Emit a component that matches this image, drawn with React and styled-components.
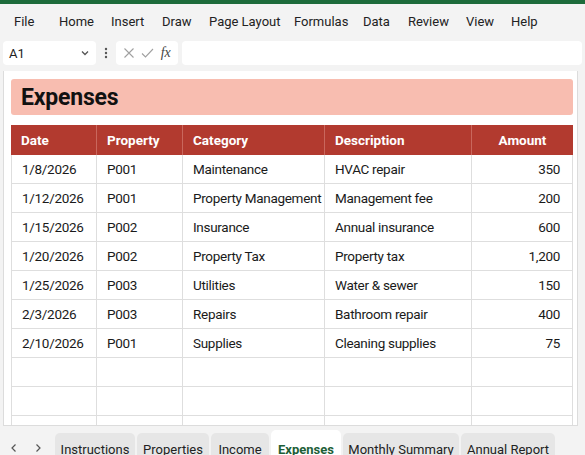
import React from 'react';
import styled, { createGlobalStyle } from 'styled-components';

const GlobalStyle = createGlobalStyle`
  html, body { margin: 0; padding: 0; background: #f3f3f3; }
  body { font-family: Roboto, "Liberation Sans", sans-serif; }
`;

const Frame = styled.div`
  width: 585px;
  height: 455px;
  overflow: hidden;
  display: flex;
  flex-direction: column;
  background: #f3f3f3;
`;

const TopStrip = styled.div`
  height: 4px;
  background: #1d6b3b;
  flex-shrink: 0;
`;

const MenuBar = styled.div`
  height: 35px;
  display: flex;
  align-items: center;
  padding-left: 14px;
  font-family: Roboto, "Liberation Sans", sans-serif;
  font-size: 13px;
  color: #222;
  flex-shrink: 0;
`;

const MenuItem = styled.span`
  width: ${p => p.w}px;
  white-space: nowrap;
`;

const FormulaRow = styled.div`
  height: 28px;
  display: flex;
  align-items: center;
  padding: 0 3px;
  gap: 4px;
  flex-shrink: 0;
`;

const NameBox = styled.div`
  width: 93px;
  height: 24px;
  box-sizing: border-box;
  background: #fff;
  border-radius: 4px;
  display: flex;
  align-items: center;
  justify-content: space-between;
  padding: 0 6px;
  font-size: 13px;
  color: #222;
`;

const Dots = styled.div`
  width: 12px;
  display: flex;
  justify-content: center;
`;

const FxBox = styled.div`
  width: 62px;
  height: 24px;
  box-sizing: border-box;
  background: #fff;
  border-radius: 4px;
  display: flex;
  align-items: center;
  justify-content: space-around;
  padding: 0 4px;
`;

const FxText = styled.span`
  font-family: "Liberation Serif", serif;
  font-style: italic;
  font-size: 14px;
  color: #444;
`;

const FormulaInput = styled.div`
  flex: 1;
  height: 24px;
  background: #fff;
  border-radius: 4px;
`;

const Sheet = styled.div`
  flex: 1;
  margin: 4px 7px 0 3px;
  background: #fff;
  border-left: 1px solid #dcdcdc;
  border-right: 1px solid #dcdcdc;
  border-bottom: 1px solid #dcdcdc;
  padding: 8px 4px 0 7px;
  overflow: hidden;
`;

const TitleBand = styled.div`
  height: 36px;
  background: #f8bdb0;
  border-radius: 3px;
  display: flex;
  align-items: center;
  padding-left: 10px;
  font-weight: 700;
  font-size: 23px;
  letter-spacing: -0.2px;
  color: #111;
  margin-bottom: 10px;
`;

const Table = styled.div`
  display: grid;
  grid-template-columns: 85px 86px 142px 147px 102px;
  width: 562px;
`;

const HeadCell = styled.div`
  height: 30px;
  background: #b23a2f;
  color: #fff;
  font-weight: 700;
  font-size: 13.5px;
  display: flex;
  align-items: center;
  justify-content: ${p => (p.center ? 'center' : 'flex-start')};
  padding: 0 10px;
  border-left: ${p => (p.first ? 'none' : '1px solid #c9675d')};
  box-sizing: border-box;
`;

const Cell = styled.div`
  height: 29px;
  box-sizing: border-box;
  border-bottom: 1px solid #dedede;
  border-left: 1px solid #dedede;
  border-right: ${p => (p.last ? '1px solid #dedede' : 'none')};
  display: flex;
  align-items: center;
  justify-content: ${p => (p.right ? 'flex-end' : 'flex-start')};
  padding: 0 12px 0 10px;
  font-size: 13.5px;
  letter-spacing: -0.3px;
  color: #1a1a1a;
  white-space: nowrap;
`;

const TabBar = styled.div`
  height: 29px;
  display: flex;
  align-items: flex-start;
  padding: 4px 0 0 2px;
  box-sizing: border-box;
  overflow: hidden;
  flex-shrink: 0;
  font-family: Roboto, "Liberation Sans", sans-serif;
  font-size: 13px;
`;

const Arrow = styled.span`
  width: 24px;
  height: 32px;
  display: flex;
  align-items: center;
  justify-content: center;
  margin-top: 2px;
`;

const Spacer = styled.span`
  width: 5px;
`;

const Tab = styled.div`
  width: ${p => p.w}px;
  flex-shrink: 0;
  display: flex;
  align-items: center;
  justify-content: center;
  margin-right: 2px;
  margin-top: ${p => (p.active ? 0 : 3)}px;
  border-radius: 5px 5px 0 0;
  background: ${p => (p.active ? '#ffffff' : '#e6e6e6')};
  color: ${p => (p.active ? '#1d5e37' : '#222')};
  font-weight: ${p => (p.active ? 700 : 400)};
  height: ${p => (p.active ? 35 : 32)}px;
  box-sizing: border-box;
  padding-top: ${p => (p.active ? 3 : 0)}px;
  white-space: nowrap;
`;

const menu = [
  ['File', 45], ['Home', 52], ['Insert', 51], ['Draw', 47], ['Page Layout', 85],
  ['Formulas', 69], ['Data', 45], ['Review', 58], ['View', 45], ['Help', 40],
];

const rows = [
  ['1/8/2026', 'P001', 'Maintenance', 'HVAC repair', '350'],
  ['1/12/2026', 'P001', 'Property Management', 'Management fee', '200'],
  ['1/15/2026', 'P002', 'Insurance', 'Annual insurance', '600'],
  ['1/20/2026', 'P002', 'Property Tax', 'Property tax', '1,200'],
  ['1/25/2026', 'P003', 'Utilities', 'Water & sewer', '150'],
  ['2/3/2026', 'P003', 'Repairs', 'Bathroom repair', '400'],
  ['2/10/2026', 'P001', 'Supplies', 'Cleaning supplies', '75'],
  ['', '', '', '', ''],
  ['', '', '', '', ''],
  ['', '', '', '', ''],
];

const tabs = [
  ['Instructions', 80], ['Properties', 72], ['Income', 58],
  ['Expenses', 70, true], ['Monthly Summary', 116], ['Annual Report', 94],
];

const headers = ['Date', 'Property', 'Category', 'Description', 'Amount'];

export default function App() {
  return (
    <Frame>
      <GlobalStyle />
      <TopStrip />
      <MenuBar>
        {menu.map(([m, w]) => <MenuItem key={m} w={w}>{m}</MenuItem>)}
      </MenuBar>
      <FormulaRow>
        <NameBox>
          <span>A1</span>
          <svg width="10" height="10" viewBox="0 0 10 10">
            <path d="M2 3.5 L5 6.5 L8 3.5" fill="none" stroke="#555" strokeWidth="1.3" />
          </svg>
        </NameBox>
        <Dots>
          <svg width="4" height="14" viewBox="0 0 4 14">
            <circle cx="2" cy="3" r="1.2" fill="#555" />
            <circle cx="2" cy="7" r="1.2" fill="#555" />
            <circle cx="2" cy="11" r="1.2" fill="#555" />
          </svg>
        </Dots>
        <FxBox>
          <svg width="12" height="12" viewBox="0 0 12 12">
            <path d="M1.5 1.5 L10.5 10.5 M10.5 1.5 L1.5 10.5" stroke="#a0a0a0" strokeWidth="1.1" />
          </svg>
          <svg width="13" height="12" viewBox="0 0 13 12">
            <path d="M1 6.5 L4.5 10 L12 2" fill="none" stroke="#a0a0a0" strokeWidth="1.1" />
          </svg>
          <FxText>fx</FxText>
        </FxBox>
        <FormulaInput />
      </FormulaRow>
      <Sheet>
        <TitleBand>Expenses</TitleBand>
        <Table>
          {headers.map((h, i) => (
            <HeadCell key={h} first={i === 0} center={i === 4}>{h}</HeadCell>
          ))}
          {rows.map((r, ri) =>
            r.map((c, ci) => (
              <Cell key={ri + '-' + ci} right={ci === 4} last={ci === 4}>{c}</Cell>
            ))
          )}
        </Table>
      </Sheet>
      <TabBar>
        <Arrow>
          <svg width="10" height="10" viewBox="0 0 10 10">
            <path d="M6.5 1.5 L3 5 L6.5 8.5" fill="none" stroke="#555" strokeWidth="1.2" />
          </svg>
        </Arrow>
        <Arrow>
          <svg width="10" height="10" viewBox="0 0 10 10">
            <path d="M3.5 1.5 L7 5 L3.5 8.5" fill="none" stroke="#555" strokeWidth="1.2" />
          </svg>
        </Arrow>
        <Spacer />
        {tabs.map(([t, w, a]) => (
          <Tab key={t} w={w} active={a}>{t}</Tab>
        ))}
      </TabBar>
    </Frame>
  );
}
